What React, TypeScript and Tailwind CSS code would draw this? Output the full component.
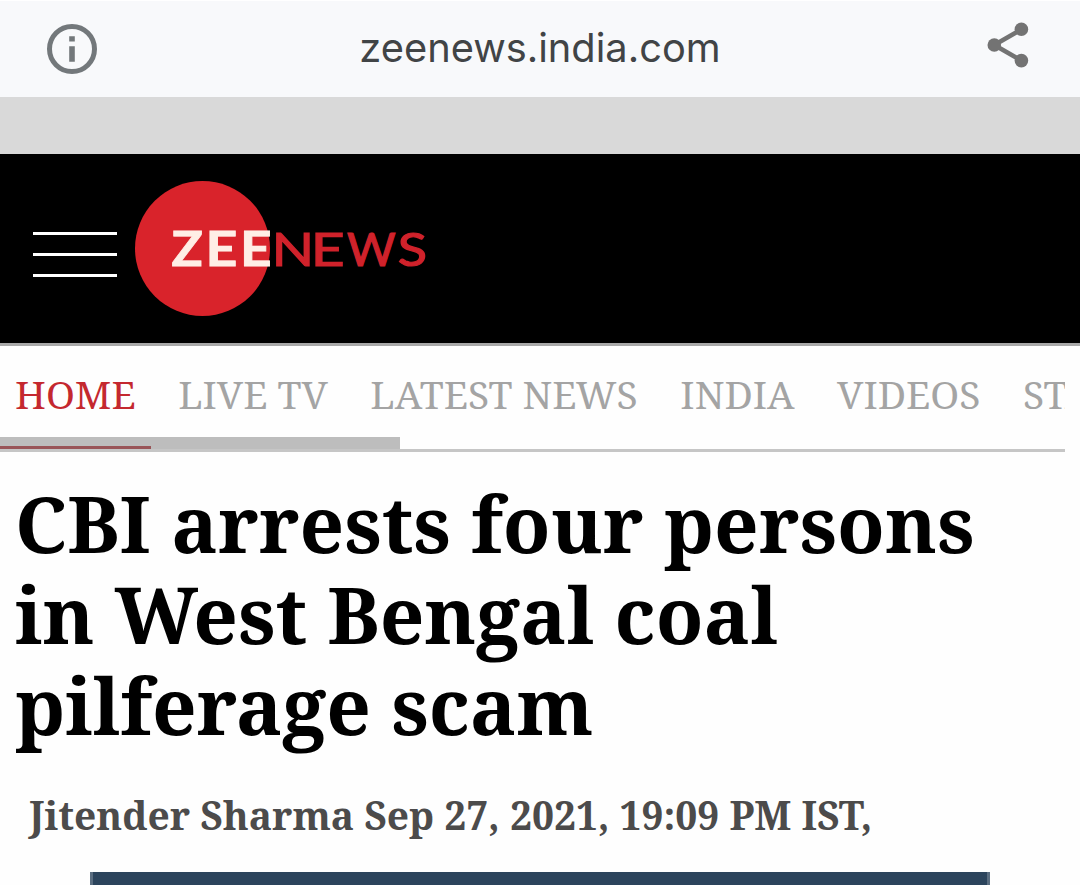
const tabs = ['HOME', 'LIVE TV', 'LATEST NEWS', 'INDIA', 'VIDEOS', 'STATES']

// wide geometric lettering: each letter has its own position and stretch
const zee = [
  { ch: 'Z', x: 36.4, s: 1.1 },
  { ch: 'E', x: 70.6, s: 1.18 },
  { ch: 'E', x: 105, s: 1.17 },
]
const news = [
  { ch: 'N', x: 136.8, s: 1.18 },
  { ch: 'E', x: 175.8, s: 1.25 },
  { ch: 'W', x: 212, s: 1 },
  { ch: 'S', x: 262.8, s: 1.15 },
]

function InfoIcon() {
  return (
    <svg width="52" height="52" viewBox="0 0 52 52" className="shrink-0">
      <circle cx="26" cy="26" r="22.5" fill="none" stroke="#73787b" strokeWidth="5" />
      <path d="M23.2 13.3h5.6v5.3h-5.6zM23.2 23.3h5.6v15.5h-5.6z" fill="#73787b" />
    </svg>
  )
}

function ShareIcon() {
  return (
    <svg width="42" height="46" viewBox="0 0 42 46" className="shrink-0">
      <path d="M34.5 7.3 7.3 23l27.2 15.6" fill="none" stroke="#737373" strokeWidth="4.6" />
      <g fill="#737373">
        <circle cx="34.4" cy="7.3" r="6.8" />
        <circle cx="7.3" cy="23" r="6.8" />
        <circle cx="34.4" cy="38.6" r="6.8" />
      </g>
    </svg>
  )
}

function ZeeLogo() {
  return (
    <svg width="292" height="136" viewBox="0 0 292 136" className="shrink-0">
      <circle cx="67.5" cy="67.5" r="67.5" fill="#d9232b" />
      <g fill="#ffeee6" stroke="#ffeee6" strokeWidth="0.8" className="font-['Lato',sans-serif] text-[47px] font-bold">
        {zee.map((l, i) => (
          <text key={i} transform={`translate(${l.x} 85) scale(${l.s} 1)`}>
            {l.ch}
          </text>
        ))}
      </g>
      <g fill="#d0222b" stroke="#d0222b" strokeWidth="1.2" className="font-['Lato',sans-serif] text-[47px]">
        {news.map((l, i) => (
          <text key={i} transform={`translate(${l.x} 85) scale(${l.s} 1)`}>
            {l.ch}
          </text>
        ))}
      </g>
    </svg>
  )
}

export default function App() {
  return (
    <div className="flex h-[885px] w-[1080px] flex-col overflow-hidden bg-[#fefefe] font-['Noto_Serif',serif]">
      {/* browser bar */}
      <div className="flex h-[97px] shrink-0 items-center justify-between border-t border-white bg-[#f8f9fb] pr-[51px] pl-[46px]">
        <InfoIcon />
        <span className="mr-[5px] mb-[2px] font-['Inter',sans-serif] text-[39.8px] leading-none text-[#414446]">zeenews.india.com</span>
        <div className="-mt-2">
          <ShareIcon />
        </div>
      </div>
      <div className="h-[57px] shrink-0 bg-[#d9d9d9]" />

      <header className="flex h-[192px] shrink-0 border-b-[3px] border-[#a9a9a9] bg-black pt-[27px] pl-[33px]">
        <div className="mt-[51px] mr-[18px] flex h-[45px] w-[84px] flex-col justify-between">
          <div className="h-[3px] bg-white" />
          <div className="h-[3px] bg-white" />
          <div className="h-[3px] bg-white" />
        </div>
        <ZeeLogo />
      </header>

      <nav className="relative mr-[15px] h-[106px] shrink-0 overflow-hidden border-b-[3px] border-[#c6c6c6]">
        <div className="flex gap-[12.5px] pt-[21px] text-[39px] leading-[54px] whitespace-nowrap">
          {tabs.map((tab, i) => (
            <a key={tab} className={i === 0 ? 'px-[15px] text-[#c4282f]' : 'px-[15px] text-[#a4a4a4]'}>
              {tab}
            </a>
          ))}
        </div>
        {/* scroll thumb with the active tab line under it */}
        <div className="absolute bottom-0 left-0 flex h-3 w-[400px] items-end bg-[#bdbdbd]">
          <div className="h-[3px] w-[151px] bg-[#995558]" />
        </div>
      </nav>

      <main className="flex flex-col">
        <h1 className="mt-[26px] ml-[15px] w-[1000px] text-[78px] leading-[91px] font-bold text-black">
          CBI arrests four persons in West Bengal coal pilferage scam
        </h1>
        <p className="mt-[37px] ml-[29px] text-[38.95px] leading-[54px] font-bold whitespace-nowrap text-[#4c4b4b]">
          Jitender Sharma Sep 27, 2021, 19:09 PM IST,
        </p>
        <div className="mt-[30px] ml-[90px] h-[40px] w-[900px] border-x-[3px] border-[#5a6d80] bg-[#2c445c]" />
      </main>
    </div>
  )
}
